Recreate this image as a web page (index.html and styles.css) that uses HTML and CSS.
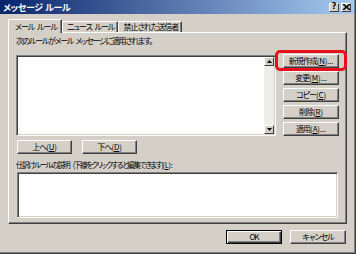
FILE: index.html
```html
<!DOCTYPE html>
<html lang="ja">
<head>
<meta charset="utf-8">
<link rel="stylesheet" href="styles.css">
</head>
<body>
<div class="window">
  <div class="titlebar">
    <span class="title">メッセージ ルール</span>
    <div class="tbtns">
      <span class="tbtn">?</span>
      <span class="tbtn close">
        <svg width="7" height="6" viewBox="0 0 7 6"><path d="M0 0L7 6M7 0L0 6" stroke="#000" stroke-width="1.6"/></svg>
      </span>
    </div>
  </div>
  <div class="content">
    <div class="tabs">
      <div class="tab active">メール ルール</div>
      <div class="tab">ニュース ルール</div>
      <div class="tab">禁止された送信者</div>
    </div>
    <div class="panel">
      <div class="caption">次のルールがメール メッセージに適用されます。</div>
      <div class="listrow">
        <div class="listbox">
          <div class="listarea"></div>
          <div class="scrollbar">
            <span class="sbtn"><svg width="5" height="3" viewBox="0 0 5 3"><path d="M0 3L2.5 0L5 3Z" fill="#000"/></svg></span>
            <span class="track"></span>
            <span class="sbtn"><svg width="5" height="3" viewBox="0 0 5 3"><path d="M0 0L2.5 3L5 0Z" fill="#000"/></svg></span>
          </div>
        </div>
        <div class="sidebtns">
          <div class="btn highlight">新規作成<span class="m">(<u>N</u>)...</span><span class="ring"></span></div>
          <div class="btn">変更<span class="m">(<u>M</u>)...</span></div>
          <div class="btn">コピー<span class="m">(<u>C</u>)</span></div>
          <div class="btn">削除<span class="m">(<u>R</u>)</span></div>
          <div class="btn">適用<span class="m">(<u>A</u>)...</span></div>
        </div>
      </div>
      <div class="updown">
        <div class="btn">上へ<span class="m">(<u>U</u>)</span></div>
        <div class="btn">下へ<span class="m">(<u>D</u>)</span></div>
      </div>
      <div class="desclabel">仕訳けルールの説明 (下線をクリックすると編集できます)<span class="m">(<u>L</u>):</span></div>
      <div class="descbox"></div>
    </div>
    <div class="footer">
      <div class="btn default">OK</div>
      <div class="btn">キャンセル</div>
    </div>
  </div>
</div>
</body>
</html>
```
FILE: styles.css
```css
* { box-sizing: border-box; }
html, body { margin: 0; padding: 0; }
body {
  width: 356px;
  height: 254px;
  background: #d4d0c8;
  font-family: "Noto Sans CJK JP", "Noto Sans", sans-serif;
  font-size: 8px;
  line-height: 1;
  color: #000;
  font-feature-settings: "palt" 1;
  letter-spacing: -1px;
  word-spacing: 2px;
  overflow: hidden;
}
.m { letter-spacing: -0.2px; }
.window {
  width: 356px;
  height: 254px;
  border-right: 1px solid #404040;
  border-bottom: 1px solid #404040;
  box-shadow: inset -1px -1px 0 #808080;
}
.titlebar {
  height: 14px;
  margin-right: 1px;
  background: linear-gradient(to right, #0a246a, #a6caf0);
  display: flex;
  align-items: center;
  justify-content: space-between;
  padding: 0 3px 0 3px;
}
.title {
  color: #fff;
  font-weight: bold;
  font-size: 9px;
  letter-spacing: -0.4px;
  word-spacing: 1px;
}
.tbtns { display: flex; gap: 1px; }
.tbtn {
  width: 10px;
  height: 9px;
  background: #d4d0c8;
  border-top: 1px solid #fff;
  border-left: 1px solid #fff;
  border-right: 1px solid #404040;
  border-bottom: 1px solid #404040;
  display: flex;
  align-items: center;
  justify-content: center;
  font-family: "DejaVu Sans", sans-serif;
  font-weight: bold;
  font-size: 8px;
  letter-spacing: 0;
}
.tbtn.close { margin-left: 1px; }
.content {
  padding: 5px 8px 0 8px;
}
.tabs {
  display: flex;
  align-items: flex-end;
  height: 13px;
  position: relative;
  z-index: 1;
}
.tab {
  height: 11px;
  padding: 0 3px 0 4px;
  border-top: 1px solid #fff;
  border-left: 1px solid #fff;
  border-right: 1px solid #404040;
  box-shadow: inset -1px 0 0 #808080;
  display: flex;
  align-items: center;
  border-top-left-radius: 1px;
  border-top-right-radius: 1px;
}
.tab.active {
  height: 14px;
  margin-bottom: -1px;
  padding: 0 4px 0 6px;
  background: #d4d0c8;
}
.panel {
  width: 339px;
  height: 192px;
  border-top: 1px solid #fff;
  border-left: 1px solid #fff;
  border-right: 1px solid #404040;
  border-bottom: 1px solid #404040;
  box-shadow: inset -1px -1px 0 #808080;
  padding: 4px 0 0 7px;
}
.caption {
  height: 18px;
  letter-spacing: -1.3px;
}
.listrow {
  display: flex;
  gap: 7px;
}
.listbox {
  width: 260px;
  height: 81px;
  border-top: 1px solid #808080;
  border-left: 1px solid #808080;
  border-right: 1px solid #fff;
  border-bottom: 1px solid #fff;
  box-shadow: inset 1px 1px 0 #404040, inset -1px -1px 0 #d4d0c8;
  background: #fff;
  display: flex;
  padding: 1px 1px 1px 1px;
}
.listarea { flex: 1; }
.scrollbar {
  width: 10px;
  display: flex;
  flex-direction: column;
  background: #eeede9;
}
.sbtn {
  height: 9px;
  background: #d4d0c8;
  border-top: 1px solid #fff;
  border-left: 1px solid #fff;
  border-right: 1px solid #404040;
  border-bottom: 1px solid #404040;
  display: flex;
  align-items: center;
  justify-content: center;
}
.track { flex: 1; }
.sidebtns {
  display: flex;
  flex-direction: column;
  gap: 3px;
  margin-top: -1px;
}
.btn {
  width: 56px;
  height: 14px;
  background: #d4d0c8;
  border-top: 1px solid #fff;
  border-left: 1px solid #fff;
  border-right: 1px solid #404040;
  border-bottom: 1px solid #404040;
  box-shadow: inset -1px -1px 0 #808080;
  display: flex;
  align-items: center;
  justify-content: center;
  white-space: nowrap;
  position: relative;
}
.btn u { text-decoration: underline; text-underline-offset: 1px; }
.highlight .ring {
  position: absolute;
  left: -9px;
  right: -9px;
  top: -5px;
  bottom: -4px;
  border: 3px solid #e8101a;
  border-radius: 5px;
}
.updown {
  display: flex;
  gap: 10px;
  margin-top: 4px;
  margin-left: 1px;
}
.updown .btn { width: 55px; }
.desclabel {
  margin-top: 7px;
  height: 11px;
  font-size: 7.5px;
  letter-spacing: -1.4px;
  word-spacing: 3px;
}
.descbox {
  width: 321px;
  height: 46px;
  margin-left: 1px;
  border-top: 1px solid #808080;
  border-left: 1px solid #808080;
  border-right: 1px solid #fff;
  border-bottom: 1px solid #fff;
  box-shadow: inset 1px 1px 0 #404040, inset -1px -1px 0 #d4d0c8;
  background: #fff;
}
.footer {
  display: flex;
  justify-content: flex-end;
  gap: 8px;
  margin-top: 6px;
  padding-right: 1px;
}
.btn.default {
  border: 1px solid #000;
  box-shadow: inset 1px 1px 0 #fff, inset -1px -1px 0 #404040, inset -2px -2px 0 #808080;
}
```
